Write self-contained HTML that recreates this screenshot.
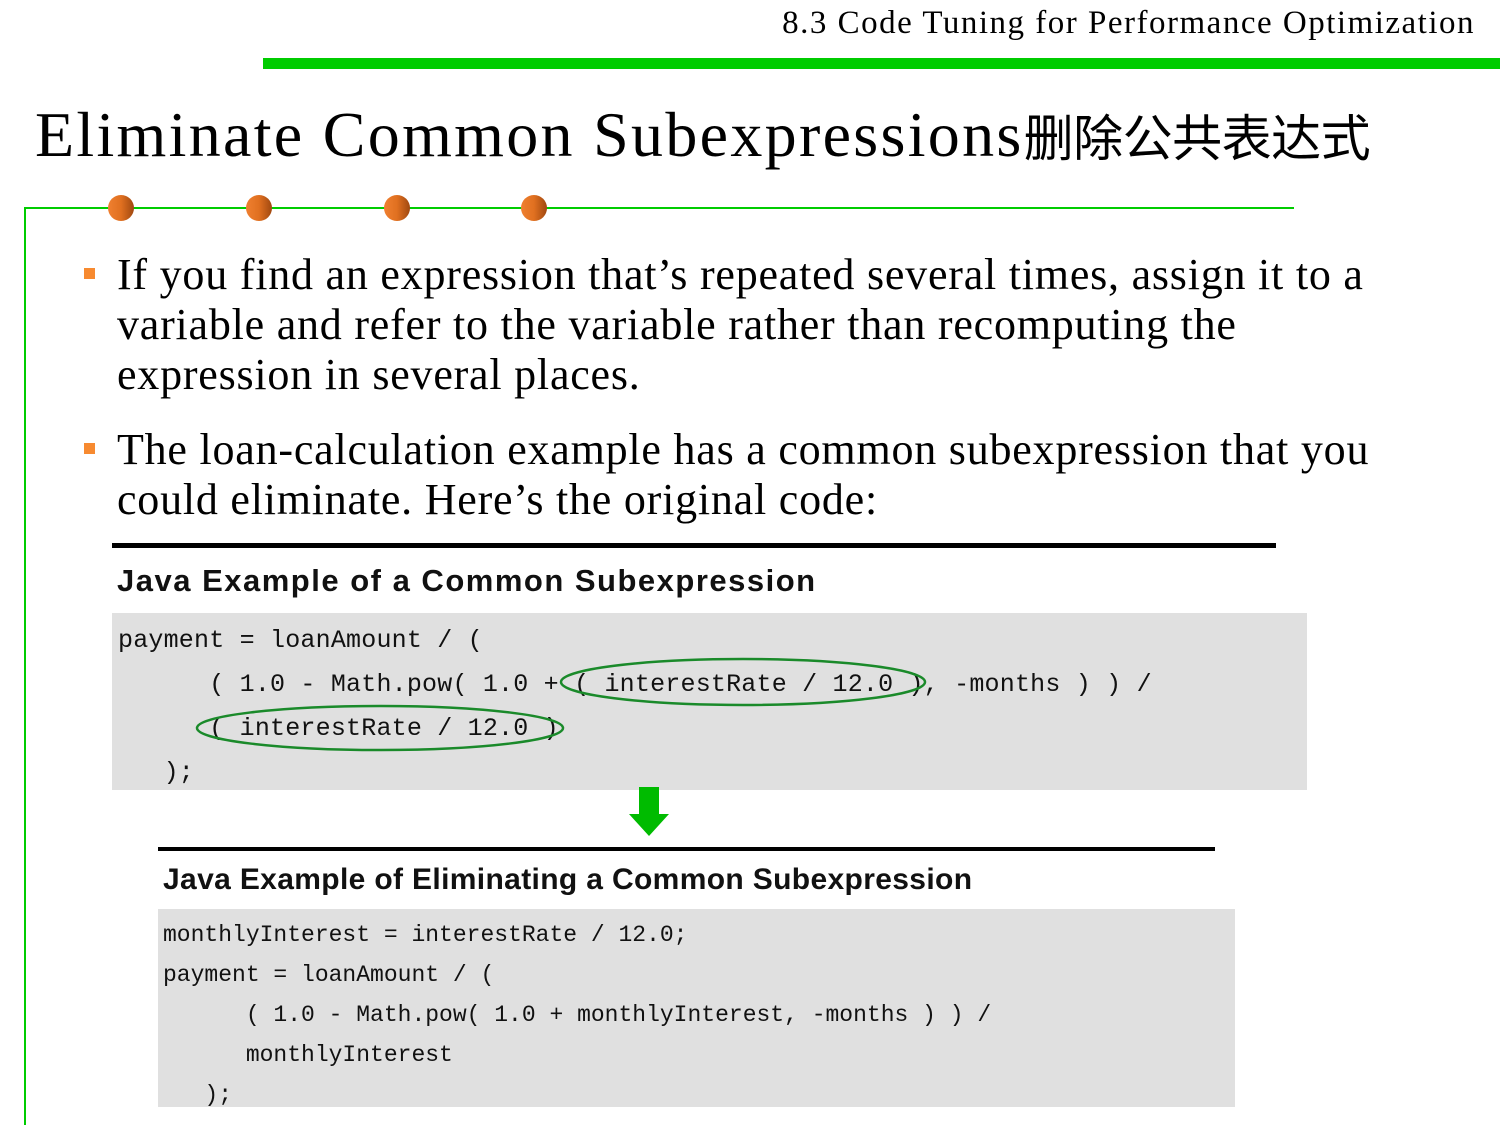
<!DOCTYPE html>
<html><head><meta charset="utf-8"><style>
body{margin:0;width:1500px;height:1125px;position:relative;background:#fff;overflow:hidden;font-family:"Liberation Serif",serif}
.a{position:absolute;white-space:pre}
.dot{position:absolute;width:26px;height:26px;border-radius:50%;background:linear-gradient(90deg,#f08030,#e07020 50%,#a04810);top:195px}
.b{position:absolute;width:11px;height:11px;background:#f78a30}
.txt{position:absolute;left:117px;font-size:44px;line-height:50px;color:#000;letter-spacing:0.78px;white-space:nowrap}
.h{position:absolute;font-family:"Liberation Sans",sans-serif;font-weight:bold;font-size:31px;color:#111}
.code{position:absolute;font-family:"Liberation Mono",monospace;color:#111;white-space:pre}
</style></head><body>
<div class="a" style="right:25px;top:5px;font-size:33px;letter-spacing:1.5px">8.3 Code Tuning for Performance Optimization</div>
<div class="a" style="left:263px;top:58px;width:1237px;height:11px;background:#00cc00"></div>
<div class="a" style="left:35px;top:98px;font-size:64px;font-family:'Liberation Serif','Noto Serif CJK SC',serif"><span style="letter-spacing:2.3px">Eliminate Common Subexpressions</span><span style="font-family:'Noto Sans CJK SC',sans-serif;font-size:50px;letter-spacing:-0.5px">删除公共表达式</span></div>
<div class="a" style="left:24px;top:207px;width:1270px;height:2px;background:#00cc00"></div>
<div class="a" style="left:24px;top:207px;width:2px;height:918px;background:#00cc00"></div>
<div class="dot" style="left:108px"></div><div class="dot" style="left:246px"></div><div class="dot" style="left:384px"></div><div class="dot" style="left:521px"></div>
<div class="b" style="left:84px;top:268px"></div>
<div class="txt" style="top:250px">If you find an expression that’s repeated several times, assign it to a<br>variable and refer to the variable rather than recomputing the<br>expression in several places.</div>
<div class="b" style="left:84px;top:443px"></div>
<div class="txt" style="top:425px">The loan-calculation example has a common subexpression that you<br>could eliminate. Here’s the original code:</div>
<div class="a" style="left:112px;top:543px;width:1164px;height:5px;background:#000"></div>
<div class="h" style="left:117px;top:563px;letter-spacing:1.5px">Java Example of a Common Subexpression</div>
<div class="a" style="left:112px;top:613px;width:1195px;height:177px;background:#e0e0e0"></div>
<div class="code" style="left:118px;top:619px;font-size:25px;line-height:44px;letter-spacing:0.2px">payment = loanAmount / (
      ( 1.0 - Math.pow( 1.0 + ( interestRate / 12.0 ), -months ) ) /
      ( interestRate / 12.0 )
   );</div>
<svg class="a" style="left:0;top:0" width="1500" height="1125">
<ellipse cx="743" cy="682" rx="182" ry="23" fill="none" stroke="#1a8a2a" stroke-width="2.5"/>
<ellipse cx="380" cy="728" rx="183" ry="22" fill="none" stroke="#1a8a2a" stroke-width="2.5"/>
<polygon points="639,787 659,787 659,814 669,814 649,836 629,814 639,814" fill="#00bb00"/>
</svg>
<div class="a" style="left:158px;top:847px;width:1057px;height:4px;background:#000"></div>
<div class="h" style="left:163px;top:863px;font-size:30px;letter-spacing:0.35px">Java Example of Eliminating a Common Subexpression</div>
<div class="a" style="left:158px;top:909px;width:1077px;height:198px;background:#e0e0e0"></div>
<div class="code" style="left:163px;top:915px;font-size:23px;line-height:40px">monthlyInterest = interestRate / 12.0;
payment = loanAmount / (
      ( 1.0 - Math.pow( 1.0 + monthlyInterest, -months ) ) /
      monthlyInterest
   );</div>
</body></html>
